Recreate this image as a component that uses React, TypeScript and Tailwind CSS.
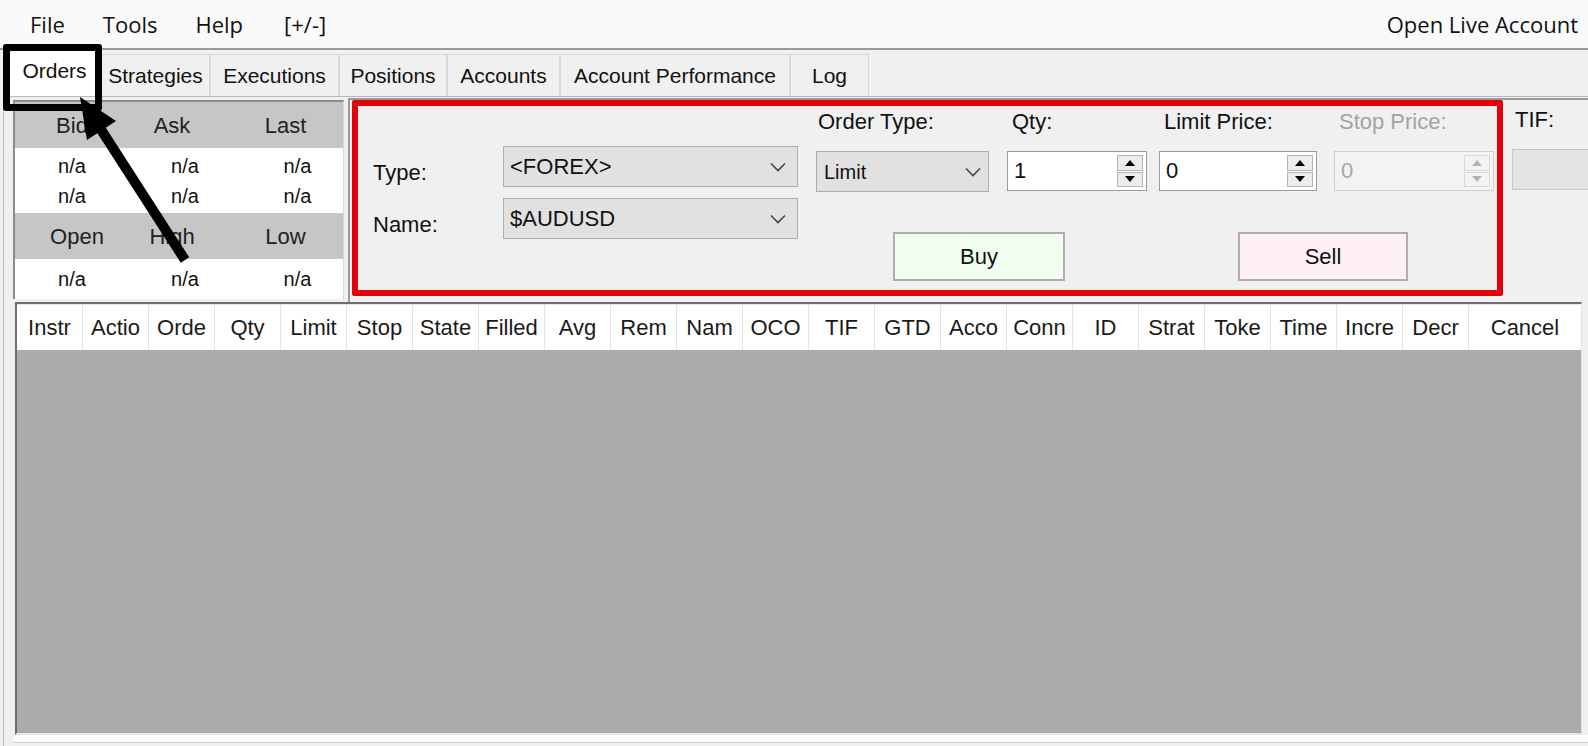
import React from 'react';

const WIN = "font-['Liberation_Sans',Arial,sans-serif]";
const UI = "font-['Open_Sans','Noto_Sans',sans-serif]";

const TABS = [
  { label: 'Orders', w: 'w-[93px]', active: true },
  { label: 'Strategies', w: 'w-[109px]' },
  { label: 'Executions', w: 'w-[129px]' },
  { label: 'Positions', w: 'w-[108px]' },
  { label: 'Accounts', w: 'w-[113px]' },
  { label: 'Account Performance', w: 'w-[230px]' },
  { label: 'Log', w: 'w-[79px]' },
];

const COLUMNS = [
  'Instr', 'Actio', 'Orde', 'Qty', 'Limit', 'Stop', 'State', 'Filled', 'Avg', 'Rem', 'Nam',
  'OCO', 'TIF', 'GTD', 'Acco', 'Conn', 'ID', 'Strat', 'Toke', 'Time', 'Incre', 'Decr',
];

function Chevron({ color = '#444' }: { color?: string }) {
  return (
    <svg width="16" height="10" viewBox="0 0 16 10" className="shrink-0">
      <polyline points="1,1.5 8,8.5 15,1.5" fill="none" stroke={color} strokeWidth="1.6" />
    </svg>
  );
}

function Combo({
  value,
  w,
  pr = 'pr-[10px]',
  pl = 'pl-[6px]',
  size = 'text-[22px]',
}: {
  value: string;
  w: string;
  pr?: string;
  pl?: string;
  size?: string;
}) {
  return (
    <div className={`${w} h-[41px] flex items-center justify-between bg-[#e1e1e1] border border-[#adadad] ${pl} ${pr}`}>
      <span className={`${size} text-[#111]`}>{value}</span>
      <Chevron />
    </div>
  );
}

function Tri({ up, color }: { up: boolean; color: string }) {
  return (
    <svg width="10" height="6" viewBox="0 0 10 6">
      <polygon points={up ? '0,6 5,0 10,6' : '0,0 10,0 5,6'} fill={color} />
    </svg>
  );
}

function Spin({ value, w, disabled }: { value: string; w: string; disabled?: boolean }) {
  const tri = disabled ? '#b5b5b5' : '#000';
  const btn = disabled ? 'border-[#dadada] bg-[#f3f3f3]' : 'border-[#b5b5b5] bg-[#ececec]';
  return (
    <div
      className={`${w} h-[40px] flex items-stretch border ${
        disabled ? 'border-[#cfcfcf] bg-[#f3f3f3]' : 'border-[#9a9a9a] bg-white'
      }`}
    >
      <span className={`flex-1 pl-[6px] leading-[38px] text-[22px] ${disabled ? 'text-[#a8a8a8]' : 'text-[#111]'}`}>
        {value}
      </span>
      <div className="flex flex-col w-[26px] my-[3px] mr-[3px] gap-[1px]">
        <div className={`flex-1 flex items-center justify-center border ${btn}`}>
          <Tri up color={tri} />
        </div>
        <div className={`flex-1 flex items-center justify-center border ${btn}`}>
          <Tri up={false} color={tri} />
        </div>
      </div>
    </div>
  );
}

function Field({
  label,
  w,
  lp = 'pl-[5px]',
  muted,
  children,
}: {
  label: string;
  w: string;
  lp?: string;
  muted?: boolean;
  children: React.ReactNode;
}) {
  return (
    <div className={`${w} flex flex-col`}>
      <div className={`h-[26px] leading-[26px] text-[22px] ${lp} ${muted ? 'text-[#a3a3a3]' : 'text-[#111]'}`}>{label}</div>
      <div className="mt-[16px]">{children}</div>
    </div>
  );
}

function QuotePanel() {
  const head = 'h-[46px] bg-[#c6c6c6] grid grid-cols-[110px_110px_111px] items-center text-[22px] text-[#222]';
  const row = 'grid grid-cols-[110px_110px_111px] text-[20px] text-[#111] leading-[30px]';
  const naRow = (
    <div className={row}>
      <span className="text-center pl-[4px]">n/a</span>
      <span className="text-center pl-[10px]">n/a</span>
      <span className="text-center pl-[14px]">n/a</span>
    </div>
  );
  return (
    <div className="w-[331px] h-[199px] mt-[3px] flex flex-col border-l-2 border-t-2 border-[#8c8c8c] border-r border-r-[#d8d8d8] bg-white">
      <div className={head}>
        <span className="text-center pl-[4px]">Bid</span>
        <span className="text-center pr-[16px]">Ask</span>
        <span className="text-center pr-[10px]">Last</span>
      </div>
      <div className="h-[65px] flex flex-col justify-center">
        {naRow}
        {naRow}
      </div>
      <div className={head}>
        <span className="text-center pl-[14px]">Open</span>
        <span className="text-center pr-[16px]">High</span>
        <span className="text-center pr-[10px]">Low</span>
      </div>
      <div className="flex-1 flex flex-col justify-center">{naRow}</div>
    </div>
  );
}

function OrderPanel() {
  return (
    <div className="flex-1 ml-[4px] mt-[1px] flex border-l-2 border-t-2 border-[#9a9a9a] bg-[#f0f0f0] overflow-hidden">
      {/* highlighted order entry */}
      <div className="w-[1151px] h-[196px] ml-[2px] shrink-0 flex border-[6px] border-[#e5000c] rounded-[2px]">
        <div className="flex flex-col pt-[38px] pl-[15px] gap-[7px]">
          <div className="flex items-center">
            <span className="w-[130px] mt-[12px] text-[22px] text-[#111]">Type:</span>
            <Combo value="<FOREX>" w="w-[295px]" pr="pr-[11px]" />
          </div>
          <div className="flex items-center">
            <span className="w-[130px] mt-[12px] text-[22px] text-[#111]">Name:</span>
            <Combo value="$AUDUSD" w="w-[295px]" pr="pr-[11px]" />
          </div>
        </div>
        <div className="ml-[18px] pt-[3px] flex flex-col">
          <div className="flex">
            <Field label="Order Type:" w="w-[173px]" lp="pl-[2px]">
              <Combo value="Limit" w="w-[173px]" pl="pl-[7px]" pr="pr-[7px]" size="text-[20px]" />
            </Field>
            <div className="w-[18px]" />
            <Field label="Qty:" w="w-[140px]">
              <Spin value="1" w="w-[140px]" />
            </Field>
            <div className="w-[12px]" />
            <Field label="Limit Price:" w="w-[158px]">
              <Spin value="0" w="w-[158px]" />
            </Field>
            <div className="w-[17px]" />
            <Field label="Stop Price:" w="w-[160px]" muted>
              <Spin value="0" w="w-[160px]" disabled />
            </Field>
          </div>
          <div className="flex mt-[40px]">
            <button className="ml-[77px] w-[172px] h-[49px] bg-[#f0fff0] border-2 border-[#adadad] text-[22px] text-[#111]">
              Buy
            </button>
            <button className="ml-[173px] w-[170px] h-[49px] bg-[#fff0f5] border-2 border-[#adadad] text-[22px] text-[#111]">
              Sell
            </button>
          </div>
        </div>
      </div>
      <div className="ml-[9px] pt-[7px] flex flex-col shrink-0">
        <span className="h-[26px] leading-[26px] pl-[3px] text-[22px] text-[#111]">TIF:</span>
        <div className="mt-[16px] w-[90px] h-[41px] bg-[#e4e4e4] border border-[#c6c6c6]" />
      </div>
    </div>
  );
}

function OrdersGrid() {
  return (
    <div className="ml-[2px] mr-[6px] h-[433px] flex flex-col border-t-2 border-l-2 border-[#6e6e6e] border-b-2 border-b-[#e6e6e6] border-r border-r-[#e0e0e0] bg-[#ababab]">
      <div className="h-[46px] flex bg-white border-t border-[#e8e8e8]">
        {COLUMNS.map((c) => (
          <div
            key={c}
            className="w-[66px] shrink-0 flex items-center justify-center overflow-hidden whitespace-nowrap border-r border-[#e3e3e3] text-[22px] text-[#1a1a1a]"
          >
            {c}
          </div>
        ))}
        <div className="flex-1 flex items-center justify-center text-[22px] text-[#1a1a1a]">Cancel</div>
      </div>
      <div className="flex-1" />
    </div>
  );
}

export default function App() {
  return (
    <div className={`relative w-[1588px] h-[746px] overflow-hidden bg-[#f0f0f0] ${WIN}`}>
      {/* menu */}
      <div className={`h-[50px] flex items-center justify-between bg-[#fafafa] border-b-2 border-[#9a9a9a] pl-[30px] pr-[10px] ${UI}`}>
        <div className="flex gap-[38px] text-[22px] text-[#111]">
          <span>File</span>
          <span>Tools</span>
          <span>Help</span>
          <span className="ml-[3px]">[+/-]</span>
        </div>
        <span className="text-[22px] text-[#111]">Open Live Account</span>
      </div>

      {/* tabs */}
      <div className="h-[46px] flex items-end pl-[8px] bg-[#f0f0f0]">
        {TABS.map((t) => (
          <div
            key={t.label}
            className={`${t.w} flex items-center justify-center border border-b-0 border-[#d9d9d9] text-[21px] text-[#111] ${
              t.active ? 'h-[47px] bg-white relative z-10 pb-[4px]' : 'h-[42px] bg-[#f0f0f0]'
            }`}
          >
            {t.label}
          </div>
        ))}
      </div>

      {/* tab page */}
      <div className="ml-[3px] h-[650px] flex flex-col border-l border-t border-[#b8b8b8] pl-[9px] bg-[#f0f0f0]">
        <div className="h-[205px] flex">
          <QuotePanel />
          <OrderPanel />
        </div>
        <OrdersGrid />
        <div className="flex-1 bg-white border-b border-[#d0d0d0] mb-[3px]" />
      </div>

      {/* annotation: box round the Orders tab */}
      <div className="absolute left-[3px] top-[44px] w-[99px] h-[67px] border-[7px] border-black rounded-[3px] z-20 pointer-events-none" />
      {/* annotation: arrow */}
      <svg className="absolute left-0 top-0 z-20 pointer-events-none" width="220" height="280" viewBox="0 0 220 280">
        <line x1="185" y1="260" x2="100" y2="128" stroke="#000" strokeWidth="10" />
        <polygon points="80,97 116,121 87,140" fill="#000" />
      </svg>
    </div>
  );
}
